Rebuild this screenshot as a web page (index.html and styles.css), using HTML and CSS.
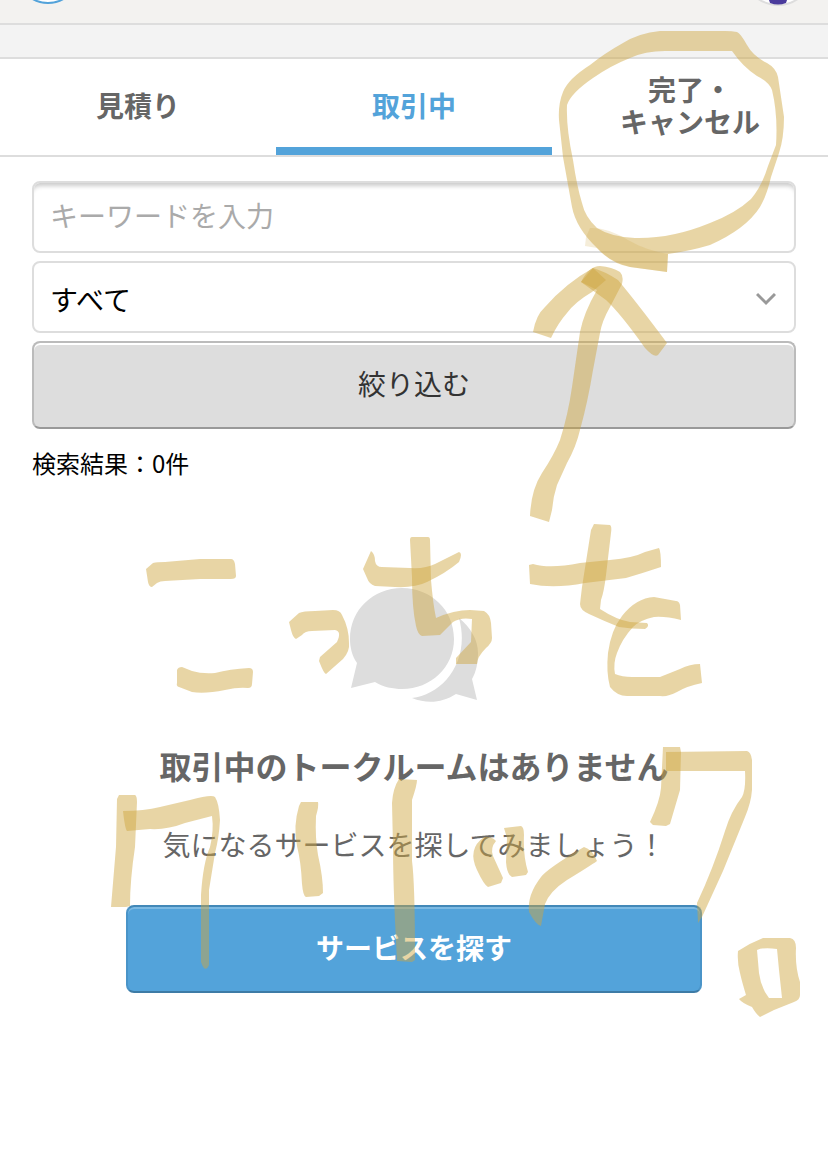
FILE: index.html
```
<!DOCTYPE html>
<html lang="ja">
<head>
  <meta charset="UTF-8">
  <meta name="viewport" content="width=device-width, initial-scale=1.0">
  <title>トークルーム</title>
  <link rel="stylesheet" href="styles.css">
</head>
<body>
  <header class="header">
    <a class="header-link" href="#" aria-label="メニュー">
      <svg width="64" height="23" viewBox="0 0 64 23">
        <circle cx="32" cy="-28" r="31" fill="#fff" stroke="#53a3da" stroke-width="2"/>
      </svg>
    </a>
    <a class="header-link" href="#" aria-label="マイページ">
      <svg width="68" height="23" viewBox="0 0 68 23">
        <circle cx="34" cy="-30" r="35" fill="#fff" stroke="#ddd" stroke-width="2"/>
        <path d="M25 0 H43 L42 3 Q34 6 26 3 Z" fill="#4a3b9c"/>
      </svg>
    </a>
  </header>
  <div class="band"></div>

  <nav class="tabs">
    <a class="tab" href="#">見積り</a>
    <a class="tab active" href="#" aria-current="page">取引中</a>
    <a class="tab" href="#">完了・<br>キャンセル</a>
  </nav>

  <main class="main">
    <form class="search">
      <input class="field keyword" type="text" placeholder="キーワードを入力" aria-label="キーワード">
      <div class="select-wrap">
        <select class="field select" aria-label="絞り込み条件">
          <option>すべて</option>
        </select>
        <svg class="chevron" width="20" height="14" viewBox="0 0 20 14">
          <path d="M1 2 L10 11 L19 2" fill="none" stroke="#999" stroke-width="3"/>
        </svg>
      </div>
      <button class="btn btn-filter" type="button">絞り込む</button>
    </form>
    <p class="result">検索結果：0件</p>

    <section class="empty">
      <svg class="talk-icon" width="128" height="115" viewBox="0 0 128 115" fill="#ddd">
        <path d="M52 0 C81 0 104 22 104 51 C104 79 81 101 52 101 C43 101 33 99 25 94 L1 100 L7 75 C2 68 0 59 0 51 C0 22 23 0 52 0 Z"/>
        <path d="M109 30 C121 40 128 52 128 65 C128 75 126 84 122 91 L127 112 L106 106 C92 115 77 116 62 110 C93 107 121 73 109 30 Z"/>
      </svg>
      <h1 class="empty-title">取引中のトークルームはありません</h1>
      <p class="empty-text">気になるサービスを探してみましょう！</p>
      <button class="btn btn-primary" type="button">サービスを探す</button>
    </section>
  </main>

  <!-- highlighter marks over the page -->
  <svg class="marker" viewBox="0 0 828 1162" role="img" aria-label="こっちをクリック。">
    <!-- ring and arrow -->
    <path fill-rule="evenodd" d="M737 32 Q732 31 725 31 L660 31 Q639 33 623 43 Q605 53 590 65 Q568 79 563 92 Q558 104 559 120 L563 157 L572 207 Q576 228 597 248 Q612 264 630 267 L667 272 L668 254 Q690 251 710 245 Q746 229 760 207 Q767 195 771 177 L779 153 Q784 138 784 117 L778 77 Q776 68 767 63 Q753 56 747 45 Q741 34 737 32 Z M732 51 L665 51 Q645 51 630 58 Q610 66 593 78 Q571 93 567 105 Q566 127 573 160 Q577 187 582 203 Q585 217 597 228 Q611 237 635 238 Q671 239 710 223 Q736 213 751 199 Q762 186 768 166 L776 145 Q778 115 772 90 Q769 82 757 76 Q743 67 732 51 Z"/>
    <path class="overlap" d="M590 228 Q607 227 628 240 Q645 250 668 254 L667 272 L630 267 Q606 260 597 248 L585 246 L586 237 Z"/>
    <path d="M593 268 L606 280 L592 292 Q575 302 567 313 Q558 323 551 338 L533 332 Q536 315 545 307 Q566 283 593 268 Z"/>
    <path d="M581 282 Q589 266 600 266 Q612 267 620 272 Q624 276 622 284 L610 307 Q602 321 600 333 L593 370 Q588 401 580 430 Q576 447 567 463 L557 485 Q553 497 552 510 L549 522 L530 516 Q531 490 542 473 Q554 455 560 440 Q568 415 572 387 L580 332 Q584 312 597 290 Z"/>
    <path d="M593 268 Q604 271 618 280 Q638 304 667 343 L658 355 Q654 358 645 348 Q621 314 606 300 L581 282 Z"/>
    <!-- first line -->
    <path d="M146 569 L153 563 Q157 562 165 562 L200 559 L231 559 Q234 559 235 564 L236 576 Q236 579 231 579 L200 579 L165 581 Q160 581 157 583 L152 587 Q149 587 148 582 Z"/>
    <path d="M182 667 L192 671 Q202 674 215 673 Q230 669 249 668 Q253 668 253 672 L252 684 Q252 688 248 688 Q238 687 225 690 Q205 694 192 692 L179 687 Q176 686 177 683 L177 670 Q178 667 182 667 Z"/>
    <path d="M289 622 L299 613 Q303 611 315 611 L333 610 Q340 610 342 615 Q349 628 349 643 Q350 651 343 659 L326 674 Q324 674 319 661 L320 657 L337 642 Q342 631 335 630 L312 631 Q305 631 302 635 L296 639 Q293 638 291 630 Z"/>
    <path d="M371 551 Q375 554 375 561 Q376 567 382 567 L410 568 Q425 569 435 564 L459 552 Q463 553 459 562 Q446 573 427 582 Q415 588 395 587 L375 586 Q369 584 367 578 L363 569 Z"/>
    <path d="M412 537 L428 537 Q430 537 430 540 L431 580 Q433 604 436 618 Q454 610 470 610 L484 611 Q490 614 491 623 L492 638 Q492 643 486 648 Q477 657 477 664 L456 664 L456 658 L471 642 L472 619 Q461 617 453 622 L440 635 L422 636 Q418 635 416 626 Q412 608 412 577 L410 540 Q410 537 412 537 Z"/>
    <path d="M529 565 L533 564 Q550 569 580 563 L610 560 Q633 558 645 552 L659 548 Q661 551 661 567 Q643 573 626 578 L585 583 Q554 589 530 584 Z"/>
    <path d="M594 524 L610 525 Q612 526 611 533 L606 575 Q604 592 601 600 L600 609 Q617 620 630 622 L647 623 Q650 626 645 629 Q632 629 619 627 Q604 621 589 614 Q580 610 580 604 L582 587 L591 530 Z"/>
    <path d="M654 597 L676 601 Q679 601 680 605 L681 620 Q665 616 654 617 Q640 620 633 627 Q622 639 617 653 Q613 663 615 674 Q622 677 632 677 L660 677 L680 669 Q690 664 700 664 L702 683 Q687 686 677 692 Q668 697 660 696 L627 696 Q617 696 610 687 Q606 672 608 653 Q611 630 622 616 Q636 598 654 597 Z"/>
    <!-- second line -->
    <path d="M119 795 L135 795 Q137 796 137 802 L135 847 Q130 880 130 906 L126 907 L111 907 L116 847 L117 799 Z"/>
    <path d="M123 811 Q144 811 160 807 L190 800 Q212 794 215 797 Q219 803 220 820 Q219 838 215 853 L209 890 L209 965 Q205 974 201 962 L201 895 Q203 863 210 847 Q214 831 212 816 L185 823 Q167 830 150 829 L127 831 Q125 829 123 811 Z"/>
    <path d="M301 802 L318 802 Q319 806 316 816 Q315 838 318 855 Q323 877 323 893 L319 896 L306 897 Q303 896 302 884 Q301 862 297 846 Q293 826 299 806 Z"/>
    <path d="M399 779 L417 780 Q417 785 412 800 Q412 835 412 861 Q415 883 415 960 L412 962 L397 961 L395 921 Q393 875 393 847 L392 803 Q393 788 399 779 Z"/>
    <path d="M484 837 Q491 836 496 841 Q490 848 493 856 L503 878 L501 883 L488 887 Q484 885 477 870 Q467 849 484 837 Z"/>
    <path d="M504 828 L521 826 Q524 827 524 835 Q523 856 528 872 L526 875 L512 877 Q507 875 506 862 L507 838 Z"/>
    <path d="M584 847 Q592 849 597 861 Q590 866 567 880 Q550 891 545 904 L541 926 Q536 925 529 912 Q527 895 541 877 Q548 868 584 847 Z"/>
    <path d="M663 747 L680 747 L681 752 L680 790 L670 824 L666 826 L653 825 L650 822 Q660 801 661 788 Z"/>
    <path d="M666 752 L747 751 Q751 752 752 760 L752 790 Q751 803 745 817 L723 871 L702 917 L698 923 L697 903 Q713 869 725 831 Q731 811 742 797 Q746 790 745 771 L666 771 Z"/>
    <path fill-rule="evenodd" d="M738 951 Q750 943 763 938 L790 938 Q796 939 796 948 Q795 967 800 982 L800 995 Q800 1000 794 1002 L774 1010 L760 1017 Q756 1014 752 1007 Q742 1003 739 999 L746 995 Q742 982 740 973 Q737 962 738 951 Z M757 950 Q764 947 777 949 L779 970 L782 998 L769 998 Q761 988 759 973 Z"/>
  </svg>
</body>
</html>
```
FILE: styles.css
```
* {
  box-sizing: border-box;
}

body {
  position: relative;
  min-height: 100vh;
  margin: 0;
  background: #fff;
  color: #000;
  font-family: "Noto Sans CJK JP", sans-serif;
  font-size: 28px;
}

.header {
  display: flex;
  justify-content: space-between;
  padding: 0 16px;
  background: #f3f2f0;
  border-bottom: 2px solid #ddd;
}

.header-link {
  display: block;
  height: 23px;
}

.header-link svg {
  display: block;
}

.band {
  height: 34px;
  background: #f3f3f3;
  border-bottom: 2px solid #ddd;
}

.tabs {
  display: grid;
  grid-template-columns: 1fr 1fr 1fr;
  border-bottom: 2px solid #ddd;
}

.tab {
  display: flex;
  align-items: center;
  justify-content: center;
  height: 96px;
  padding-top: 4px;
  border-bottom: 8px solid transparent;
  color: #666;
  font-weight: bold;
  line-height: 32px;
  text-align: center;
  text-decoration: none;
}

.tab.active {
  color: #53a3da;
  border-bottom-color: #53a3da;
}

.main {
  padding: 24px 32px;
}

.search {
  display: flex;
  flex-direction: column;
  gap: 8px;
}

.field {
  display: block;
  width: 100%;
  height: 72px;
  padding: 0 16px;
  border: 2px solid #ddd;
  border-radius: 8px;
  background: #fff;
  color: #000;
  font: inherit;
}

.keyword {
  padding-bottom: 4px;
  box-shadow: inset 0 6px 4px -3px #ccc;
}

.keyword::placeholder {
  color: #aaa;
  opacity: 1;
}

.select-wrap {
  position: relative;
}

.select {
  padding-top: 4px;
  appearance: none;
}

.chevron {
  position: absolute;
  right: 20px;
  top: 31px;
  pointer-events: none;
}

.btn {
  display: block;
  width: 100%;
  height: 88px;
  padding: 0 0 4px;
  border: 2px solid;
  border-radius: 8px;
  font: inherit;
}

.btn-filter {
  background: #ddd;
  border-color: #bbb #bbb #999;
  box-shadow: inset 0 2px #fff;
  color: #333;
}

.btn-primary {
  max-width: 576px;
  background: #53a3da;
  border-color: #4288b8 #4a94c8 #3d7ba6;
  box-shadow: inset 0 2px #7dbae3;
  color: #fff;
  font-weight: bold;
}

.result {
  margin: 16px 0 0;
  font-size: 24px;
  line-height: 36px;
}

.empty {
  display: flex;
  flex-direction: column;
  align-items: center;
  padding-top: 107px;
}

.empty-title {
  margin: 38px 0 0;
  color: #666;
  font-size: 32px;
  line-height: 48px;
}

.empty-text {
  margin: 34px 0 40px;
  color: #666;
  line-height: 42px;
}

.marker {
  position: absolute;
  top: 0;
  left: 0;
  width: 100%;
  fill: #cea640;
  fill-opacity: 0.47;
  pointer-events: none;
}

.marker .overlap {
  fill-opacity: 0.2;
}
```
